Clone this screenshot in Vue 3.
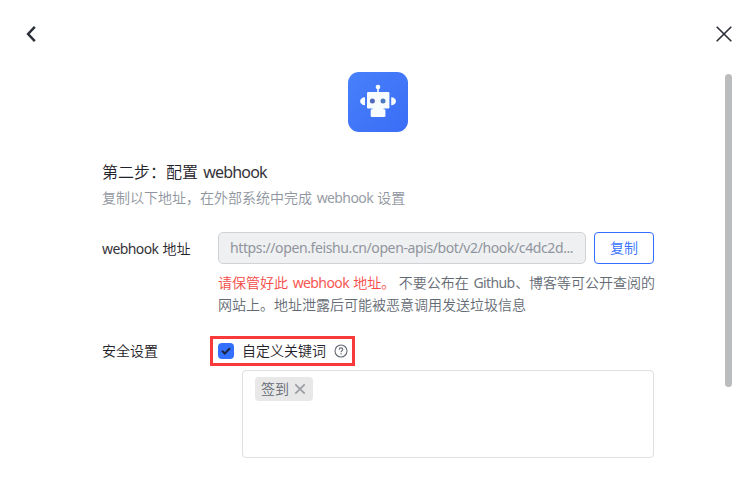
<script setup>
import { ref } from 'vue'

const url = 'https://open.feishu.cn/open-apis/bot/v2/hook/c4dc2d...'
const keywords = ref(['签到'])
const enabled = ref(true)

function removeKeyword(index) {
  keywords.value.splice(index, 1)
}
</script>

<template>
  <div class="dialog">
    <div class="side side-left">
      <button class="icon-btn back" aria-label="返回">
        <svg width="12" height="18" viewBox="0 0 12 18"><path d="M9.800 1.800 3.100 9l6.700 7.200" fill="none" stroke="#2b2f36" stroke-width="2.500" /></svg>
      </button>
    </div>

    <main class="content">
      <svg class="bot" width="60" height="60" viewBox="0 0 60 60">
        <defs>
          <linearGradient id="bot-bg" x1="0" y1="0" x2="1" y2="1">
            <stop offset="0" stop-color="#4880fa" />
            <stop offset="1" stop-color="#3a6df6" />
          </linearGradient>
        </defs>
        <rect width="60" height="60" rx="11" fill="url(#bot-bg)" />
        <g fill="#f8fcff">
          <circle cx="30" cy="15" r="2.300" />
          <rect x="29.200" y="15" width="1.600" height="6" />
          <rect x="19" y="20" width="22.400" height="16.500" rx="1.200" />
          <path d="M17 25.200v8c-2.800 0-4.900-1.700-4.900-4s2.100-4 4.900-4zM43.200 25.200v8c2.800 0 4.800-1.700 4.800-4s-2-4-4.800-4z" />
          <path d="M24.500 36h11v1.300h1q.9 0 .9 1V44q0 1-1 1H23.700q-1 0-1-1v-5.700q0-1 .9-1h.9z" />
        </g>
        <circle cx="24.400" cy="29" r="2.500" fill="#5367bd" />
        <circle cx="35" cy="29" r="2.500" fill="#4c7bbd" />
      </svg>

      <h1 class="title">第二步：配置 <span class="latin">webhook</span></h1>
      <p class="subtitle">复制以下地址，在外部系统中完成 <span class="latin">webhook</span> 设置</p>

      <div class="row">
        <label class="label"><span class="latin first">webhook</span> 地址</label>
        <div class="field">
          <div class="address">
            <div class="input"><span class="url">{{ url }}</span></div>
            <button class="copy">复制</button>
          </div>
          <p class="hint">
            <span class="warn">请保管好此 <span class="latin">webhook</span> 地址。</span> 不要公布在 <span class="latin">Github</span>、博客等可公开查阅的<br />网站上。地址泄露后可能被恶意调用发送垃圾信息
          </p>
        </div>
      </div>

      <div class="row security">
        <label class="label security-label">安全设置</label>
        <div class="field">
          <div class="option">
            <button class="checkbox" role="checkbox" :aria-checked="enabled" @click="enabled = !enabled">
              <svg v-if="enabled" width="10" height="8" viewBox="0 0 10 8"><path d="M1 3.700 3.800 6.500 9 1.300" fill="none" stroke="#1d2640" stroke-width="2" /></svg>
            </button>
            <span class="option-text">自定义关键词</span>
            <svg class="help" width="14" height="14" viewBox="0 0 14 14" fill="none" stroke="#646a73">
              <circle cx="7" cy="7" r="6" stroke-width="1.100" />
              <path d="M5.200 5.700c0-1.100.8-1.800 1.800-1.800s1.800.7 1.800 1.600c0 1.200-1.700 1.400-1.700 2.700" stroke-width="1.100" />
              <path d="M7.100 9.200v1.200" stroke-width="1.200" />
            </svg>
          </div>
          <div class="keywords">
            <span v-for="(word, i) in keywords" :key="word" class="tag">
              {{ word }}
              <svg width="12" height="12" viewBox="0 0 12 12" @click="removeKeyword(i)"><path d="M1.300 1.300l9.400 9.400M10.700 1.300l-9.400 9.400" stroke="#9a9da2" stroke-width="1.700" /></svg>
            </span>
          </div>
        </div>
      </div>
    </main>

    <div class="side side-right">
      <button class="icon-btn close" aria-label="关闭">
        <svg width="18" height="18" viewBox="0 0 18 18"><path d="M1.700 1.700l14.600 14.600M16.300 1.700 1.700 16.300" stroke="#2b2f36" stroke-width="1.600" /></svg>
      </button>
      <div class="scrollbar"></div>
    </div>
  </div>
</template>

<style>
body {
  background: #fff;
}
</style>

<style scoped>
.dialog {
  box-sizing: border-box;
  width: 756px;
  height: 479px;
  display: flex;
  overflow: hidden;
  background: #fff;
  color: #1f2329;
  font: 350 14px/22px "Noto Sans", "Noto Sans CJK SC", sans-serif;
}
button {
  font: inherit;
  padding: 0;
}
.side {
  width: 102px;
  flex: none;
  display: flex;
  flex-direction: column;
}
.icon-btn {
  display: flex;
  border: 0;
  background: none;
}
.back {
  margin: 25px 0 0 25px;
}
.side-right {
  align-items: flex-end;
}
.close {
  margin: 25px 23px 0 0;
}
.scrollbar {
  width: 7px;
  height: 313px;
  margin: 31px 24px 0 0;
  border-radius: 4px;
  background: #bbbcbe;
}
.content {
  width: 552px;
  flex: none;
  padding-top: 72px;
}
.bot {
  display: block;
  margin: 0 auto 28px;
}
.latin {
  margin: 0 0.5px 0 1px;
  font-weight: 400;
  letter-spacing: -0.6px;
  opacity: 0.92;
}
.latin.first {
  margin-left: 0;
}
.title {
  margin: 0;
  font-size: 16px;
  line-height: 24px;
  font-weight: 350;
  white-space: nowrap;
}
.title .latin {
  letter-spacing: -0.8px;
}
.subtitle {
  margin: 3px 0 0;
  color: #8f959e;
  white-space: nowrap;
}
.row {
  display: flex;
  margin-top: 23px;
}
.label {
  width: 116px;
  flex: none;
  padding-top: 6px;
  white-space: nowrap;
}
.field {
  width: 436px;
}
.address {
  display: flex;
  gap: 8px;
}
.input {
  box-sizing: border-box;
  width: 368px;
  height: 32px;
  padding: 4px 11px;
  border: 1px solid #d0d3d6;
  border-radius: 5px;
  background: #eff0f1;
  color: #8f959e;
  white-space: nowrap;
}
.url {
  font-weight: 400;
  letter-spacing: -0.39px;
}
.copy {
  box-sizing: border-box;
  width: 60px;
  height: 32px;
  border: 1px solid #3370ff;
  border-radius: 4px;
  background: #fff;
  color: #3370ff;
}
.hint {
  margin: 8px 0 0;
  color: #646a73;
  white-space: nowrap;
}
.warn {
  color: #f54a45;
}
.security {
  margin-top: 20px;
}
.security-label {
  padding-top: 4px;
}
.option {
  box-sizing: border-box;
  display: flex;
  align-items: center;
  width: 145px;
  height: 30px;
  margin-left: -8px;
  padding-left: 5px;
  border: 3px solid #f93a3a;
}
.checkbox {
  display: flex;
  align-items: center;
  justify-content: center;
  width: 16px;
  height: 16px;
  border: 0;
  border-radius: 4px;
  background: #3370ff;
}
.option-text {
  margin: 0 8px;
}
.keywords {
  box-sizing: border-box;
  width: 412px;
  height: 88px;
  margin: 4px 0 0 24px;
  padding: 6px 12px;
  border: 1px solid #dee0e3;
  border-radius: 4px;
}
.tag {
  box-sizing: border-box;
  display: flex;
  align-items: center;
  gap: 5px;
  width: 58px;
  height: 24px;
  padding-left: 6px;
  border-radius: 4px;
  background: #e8e8e9;
  color: #646a73;
}
</style>
